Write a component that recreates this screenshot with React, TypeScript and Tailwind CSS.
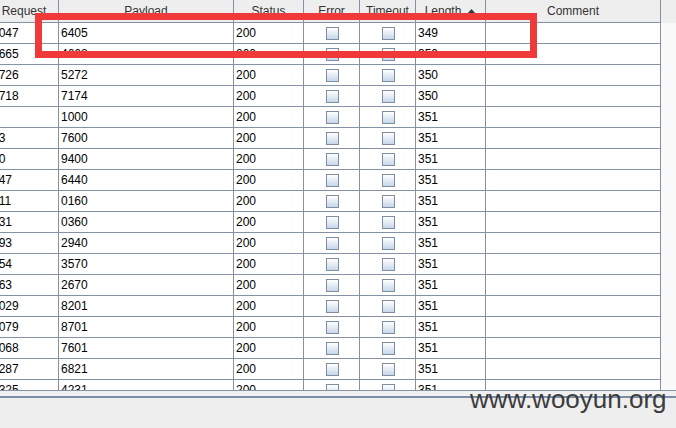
import React from 'react';

interface ResultRow {
    request: string;
    payload: string;
    status: string;
    length: string;
}

const rows: ResultRow[] = [
    { request: '1047', payload: '6405', status: '200', length: '349' },
    { request: '2665', payload: '4668', status: '200', length: '350' },
    { request: '1726', payload: '5272', status: '200', length: '350' },
    { request: '3718', payload: '7174', status: '200', length: '350' },
    { request: '0', payload: '1000', status: '200', length: '351' },
    { request: '83', payload: '7600', status: '200', length: '351' },
    { request: '50', payload: '9400', status: '200', length: '351' },
    { request: '547', payload: '6440', status: '200', length: '351' },
    { request: '911', payload: '0160', status: '200', length: '351' },
    { request: '631', payload: '0360', status: '200', length: '351' },
    { request: '293', payload: '2940', status: '200', length: '351' },
    { request: '754', payload: '3570', status: '200', length: '351' },
    { request: '863', payload: '2670', status: '200', length: '351' },
    { request: '1029', payload: '8201', status: '200', length: '351' },
    { request: '1079', payload: '8701', status: '200', length: '351' },
    { request: '2068', payload: '7601', status: '200', length: '351' },
    { request: '3287', payload: '6821', status: '200', length: '351' },
    { request: '1325', payload: '4231', status: '200', length: '351' },
];

const cols = 'grid grid-cols-[69px_175px_70px_56px_56px_70px_175px]';
const cell = 'border-r border-b border-[#8592a3] h-[21px] pl-[2px] flex items-center whitespace-nowrap overflow-hidden';
const head = 'border-r border-b border-[#8592a3] h-[23px] flex items-center justify-center whitespace-nowrap text-[#333333]';

function Check() {
    return (
        <div className="w-[13px] h-[13px] border border-[#7d8ea1] bg-linear-to-b from-white to-[#c8d7e9]" />
    );
}

export default function App() {
    return (
        <div className="relative w-[676px] h-[428px] overflow-hidden bg-[#eeeeee] font-['Liberation_Sans',Arial,sans-serif] text-[12px] text-black">
            <div className="flex h-[390px] overflow-hidden">
                <div className="-ml-[10px] shrink-0 bg-white">
                    <div className={`${cols} bg-[#eeeeee]`}>
                        <div className={head}>Request</div>
                        <div className={head}>Payload</div>
                        <div className={head}>Status</div>
                        <div className={head}>Error</div>
                        <div className={head}>Timeout</div>
                        <div className={`${head} gap-[6px]`}>
                            Length
                            <svg width="9" height="5" viewBox="0 0 9 5">
                                <path d="M0 5 L4.5 0 L9 5 Z" fill="#333b44" />
                            </svg>
                        </div>
                        <div className={head}>Comment</div>
                    </div>
                    {rows.map((r, i) => (
                        <div key={i} className={cols}>
                            <div className={cell}>{r.request}</div>
                            <div className={cell}>{r.payload}</div>
                            <div className={cell}>{r.status}</div>
                            <div className={`${cell} justify-center pl-0`}><Check /></div>
                            <div className={`${cell} justify-center pl-0`}><Check /></div>
                            <div className={cell}>{r.length}</div>
                            <div className={cell}></div>
                        </div>
                    ))}
                </div>
                <div className="flex-1 flex flex-col">
                    <div className="h-[23px] bg-[#eeeeee]" />
                    <div className="flex-1 bg-[#f9f9f9]" />
                </div>
            </div>
            <div className="h-px bg-[#8592a3]" />
            <div className="h-[5px] bg-[#f0f0f0]" />
            <div className="h-[2px] bg-[#7b8ea5]" />

            <div className="absolute left-[35px] top-[13px] w-[502px] h-[45px] border-[7px] border-[#f03a3a]" />
            <div className="absolute left-[470px] top-[386px] text-[26px] leading-none text-[#3c3c3c] font-['Liberation_Sans',Arial,sans-serif]">
                www.wooyun.org
            </div>
        </div>
    );
}
